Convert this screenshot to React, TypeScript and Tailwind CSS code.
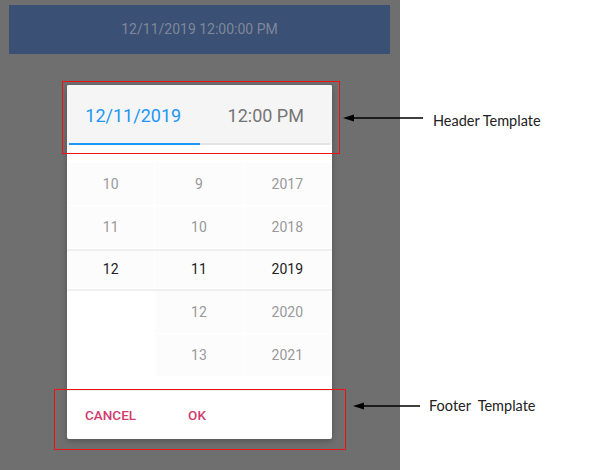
import React from 'react';

const rows: { cells: (string | null)[]; selected?: boolean }[] = [
  { cells: ['10', '9', '2017'] },
  { cells: ['11', '10', '2018'] },
  { cells: ['12', '11', '2019'], selected: true },
  { cells: [null, '12', '2020'] },
  { cells: [null, '13', '2021'] },
];

const Arrow = ({ width }: { width: number }) => (
  <svg width={width} height="10" viewBox={`0 0 ${width} 10`}>
    <line x1="8" y1="5" x2={width} y2="5" stroke="#000" strokeWidth="1.6" />
    <polygon points="0,5 11,1.5 11,8.5" fill="#000" />
  </svg>
);

export default function App() {
  return (
    <div className="relative flex w-[603px] h-[470px] bg-white overflow-hidden font-['Roboto',sans-serif]">
      {/* device screen */}
      <div className="w-[400px] h-full bg-[#6f6f70] flex flex-col items-center pl-[9px] pr-[10px] pt-[5px]">
        <div className="w-full h-[49px] bg-[#3a5075] flex items-center justify-center text-[14px] text-[#7f8798]">
          12/11/2019 12:00:00 PM
        </div>

        <div className="mt-[31px] w-[265px] bg-white rounded-[2px] shadow-[0_2px_6px_rgba(0,0,0,0.25)] overflow-hidden">
          {/* header */}
          <div className="h-[60px] bg-[#f5f5f5] flex flex-col">
            <div className="flex-1 flex items-center text-[18px] pt-[3px]">
              <div className="w-1/2 text-center text-[#2196f3]">12/11/2019</div>
              <div className="w-1/2 text-center text-[#757575]">12:00 PM</div>
            </div>
            <div className="flex h-[2px] px-[2px]">
              <div className="w-1/2 bg-[#2196f3]" />
              <div className="w-1/2 bg-[#e4e4e4]" />
            </div>
          </div>

          {/* wheels */}
          <div className="pt-[18px] pb-[13px] text-[14px]">
            {rows.map((row, i) => (
              <div
                key={i}
                className={
                  row.selected
                    ? 'grid grid-cols-3 h-[42px] border-y-2 border-[#f0f0f0] text-[#212121]'
                    : 'grid grid-cols-3 h-[43px] text-[#999999]'
                }
              >
                {row.cells.map((c, j) => (
                  <div
                    key={j}
                    className={
                      c === null
                        ? ''
                        : 'flex items-center justify-center bg-[#fcfcfc] border-r border-b border-white'
                    }
                  >
                    {c}
                  </div>
                ))}
              </div>
            ))}
          </div>

          {/* footer */}
          <div className="h-[49px] border-t border-[#eeeeee] flex items-center gap-[52px] px-[18px] text-[13.5px] font-medium text-[#d03c6d]">
            <span>CANCEL</span>
            <span>OK</span>
          </div>
        </div>
      </div>

      {/* annotations */}
      <div className="absolute left-[62px] top-[81px] w-[278px] h-[73px] border border-solid border-[#ee1111]" />
      <div className="absolute left-[54px] top-[389px] w-[292px] h-[61px] border border-solid border-[#ee1111]" />

      <div className="absolute left-[343px] top-[113px]">
        <Arrow width={80} />
      </div>
      <div className="absolute left-[433px] top-[110px] text-[14.5px] text-[#222] font-['Lato',sans-serif]">
        Header Template
      </div>

      <div className="absolute left-[353px] top-[401px]">
        <Arrow width={67} />
      </div>
      <div className="absolute left-[429px] top-[395px] text-[14.5px] text-[#222] whitespace-pre font-['Lato',sans-serif]">
        Footer  Template
      </div>
    </div>
  );
}
